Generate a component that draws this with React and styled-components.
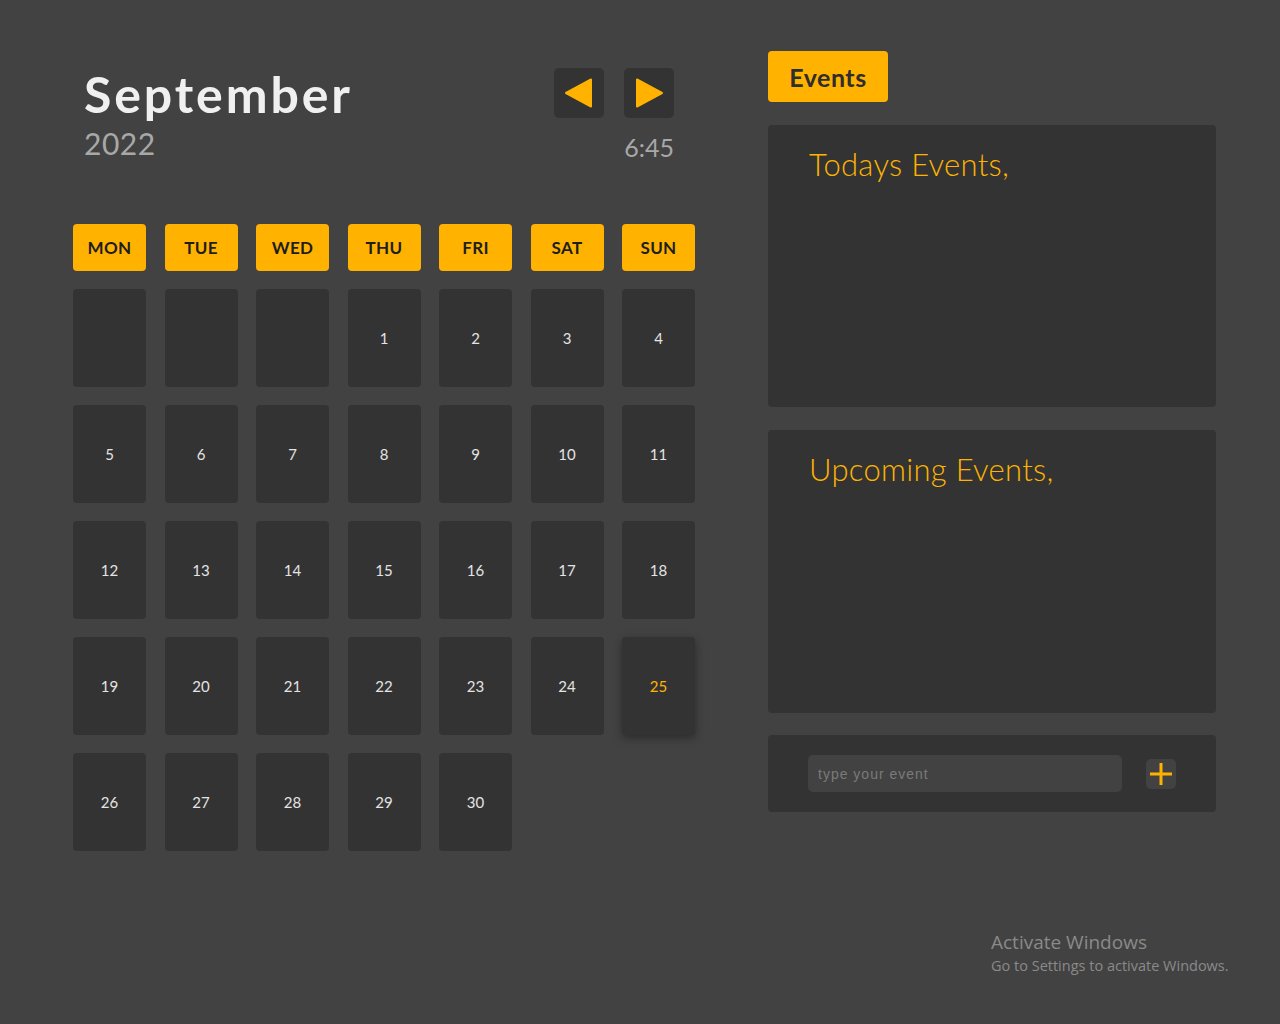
import styled, { createGlobalStyle } from "styled-components";

const GlobalStyle = createGlobalStyle`
  body {
    margin: 0;
    background: #424242;
    font-family: Lato, "Open Sans", sans-serif;
  }
`;

const orange = "#ffb300";
const panel = "#333333";

const Page = styled.div`
  position: relative;
  height: 1024px;
  display: flex;
  gap: 73px;
  padding: 51px 0 0 73px;
  box-sizing: border-box;
`;

const CalendarSide = styled.div`
  width: 622px;
  display: flex;
  flex-direction: column;
`;

const Header = styled.div`
  display: flex;
  justify-content: space-between;
  padding: 16px 21px 0 11px;
  height: 173px;
  box-sizing: border-box;
`;

const MonthBlock = styled.div`
  display: flex;
  flex-direction: column;
`;

const Month = styled.div`
  color: #f0f0f0;
  font-size: 50px;
  font-weight: 700;
  line-height: 54px;
  letter-spacing: 2.9px;
`;

const Year = styled.div`
  color: #a8a8a8;
  font-size: 30px;
  line-height: 36px;
  margin-top: 4px;
  letter-spacing: 0.5px;
`;

const Controls = styled.div`
  display: flex;
  flex-direction: column;
  align-items: flex-end;
`;

const Arrows = styled.div`
  display: flex;
  gap: 20px;
  margin-top: 1px;
`;

const ArrowButton = styled.button`
  width: 50px;
  height: 50px;
  border: none;
  border-radius: 5px;
  background: ${panel};
  display: flex;
  align-items: center;
  justify-content: center;
  padding: 0;
`;

const Time = styled.div`
  color: #a8a8a8;
  font-size: 25px;
  line-height: 30px;
  margin-top: 14px;
`;

const Grid = styled.div`
  display: grid;
  grid-template-columns: repeat(7, 73px);
  grid-auto-rows: 98px;
  grid-template-rows: 47px;
  column-gap: 18.5px;
  row-gap: 18px;
`;

const DayName = styled.div`
  background: ${orange};
  border-radius: 4px;
  display: flex;
  align-items: center;
  justify-content: center;
  color: #1e1e1e;
  font-size: 17px;
  font-weight: 700;
  letter-spacing: 0.3px;
`;

const Cell = styled.div`
  background: ${panel};
  border-radius: 4px;
  display: flex;
  align-items: center;
  justify-content: center;
  color: ${({ $today }) => ($today ? orange : "#e4e4e4")};
  font-size: 15px;
  box-shadow: ${({ $today }) => ($today ? "0 3px 8px rgba(0,0,0,0.35)" : "none")};
`;

const EventsSide = styled.div`
  width: 448px;
  display: flex;
  flex-direction: column;
  gap: 23px;
`;

const EventsTag = styled.div`
  width: 120px;
  height: 51px;
  border-radius: 4px;
  background: ${orange};
  color: #2e2e2e;
  font-size: 25px;
  font-weight: 700;
  letter-spacing: 0.5px;
  display: flex;
  align-items: center;
  justify-content: center;
`;

const EventPanel = styled.div`
  background: ${panel};
  border-radius: 4px;
  height: ${({ $h }) => $h}px;
  padding: 20px 41px;
  box-sizing: border-box;
`;

const PanelTitle = styled.div`
  color: ${orange};
  font-size: 31px;
  font-weight: 300;
  line-height: 38px;
  letter-spacing: 0.3px;
`;

const InputBar = styled.div`
  background: ${panel};
  border-radius: 4px;
  height: 77px;
  margin-top: -1px;
  display: flex;
  align-items: center;
  padding: 0 40px;
  gap: 24px;
  box-sizing: border-box;
`;

const EventInput = styled.input`
  width: 314px;
  height: 37px;
  border: none;
  border-radius: 5px;
  background: #424242;
  padding: 0 10px;
  box-sizing: border-box;
  color: #ddd;
  font-family: "Liberation Sans", Arial, sans-serif;
  font-size: 14px;
  letter-spacing: 1px;
  outline: none;

  &::placeholder {
    color: #7a7a7a;
  }
`;

const AddButton = styled.button`
  width: 30px;
  height: 30px;
  border: none;
  border-radius: 5px;
  background: #424242;
  display: flex;
  align-items: center;
  justify-content: center;
  padding: 0;
`;

const Watermark = styled.div`
  position: absolute;
  left: 991px;
  top: 931px;
  color: #8a8a8a;
  font-family: "Open Sans", "DejaVu Sans", sans-serif;
  line-height: 1.2;
`;

const WatermarkTitle = styled.div`
  font-size: 19px;
`;

const WatermarkText = styled.div`
  font-size: 14.5px;
  margin-top: 3px;
`;

const days = ["MON", "TUE", "WED", "THU", "FRI", "SAT", "SUN"];
const cells = [null, null, null, ...Array.from({ length: 30 }, (_, i) => i + 1)];

export default function App() {
  return (
    <>
      <GlobalStyle />
      <Page>
        <CalendarSide>
          <Header>
            <MonthBlock>
              <Month>September</Month>
              <Year>2022</Year>
            </MonthBlock>
            <Controls>
              <Arrows>
                <ArrowButton>
                  <svg width="30" height="30" viewBox="0 0 30 30">
                    <path d="M27 1.5 L27 28.5 L2 15 Z" fill={orange} strokeLinejoin="round" stroke={orange} strokeWidth="2" />
                  </svg>
                </ArrowButton>
                <ArrowButton>
                  <svg width="30" height="30" viewBox="0 0 30 30">
                    <path d="M3 1.5 L3 28.5 L28 15 Z" fill={orange} strokeLinejoin="round" stroke={orange} strokeWidth="2" />
                  </svg>
                </ArrowButton>
              </Arrows>
              <Time>6:45</Time>
            </Controls>
          </Header>
          <Grid>
            {days.map((d) => (
              <DayName key={d}>{d}</DayName>
            ))}
            {cells.map((n, i) => (
              <Cell key={i} $today={n === 25}>
                {n}
              </Cell>
            ))}
          </Grid>
        </CalendarSide>
        <EventsSide>
          <EventsTag>Events</EventsTag>
          <EventPanel $h={282}>
            <PanelTitle>Todays Events,</PanelTitle>
          </EventPanel>
          <EventPanel $h={283}>
            <PanelTitle>Upcoming Events,</PanelTitle>
          </EventPanel>
          <InputBar>
            <EventInput placeholder="type your event" />
            <AddButton>
              <svg width="26" height="26" viewBox="0 0 26 26">
                <path d="M13 2 V24 M2 13 H24" stroke={orange} strokeWidth="3" />
              </svg>
            </AddButton>
          </InputBar>
        </EventsSide>
        <Watermark>
          <WatermarkTitle>Activate Windows</WatermarkTitle>
          <WatermarkText>Go to Settings to activate Windows.</WatermarkText>
        </Watermark>
      </Page>
    </>
  );
}
